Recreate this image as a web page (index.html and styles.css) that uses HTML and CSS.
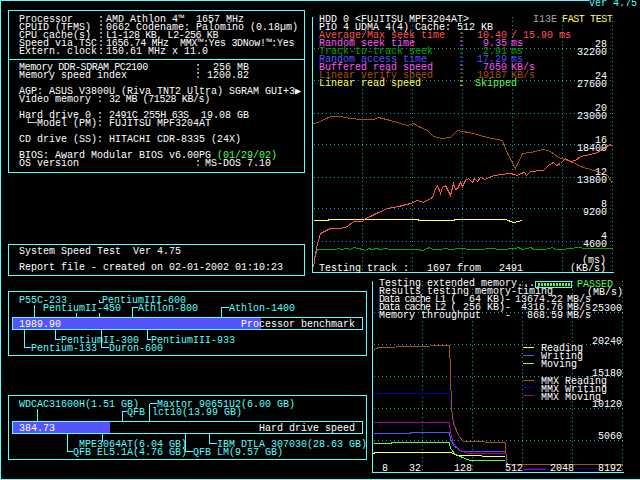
FILE: index.html
```html
<!DOCTYPE html>
<html lang="en">
<head>
  <meta charset="UTF-8" />
  <title>System Speed Test 4.75</title>
  <link rel="stylesheet" href="styles.css">
</head>
<body>
<main class="screen">
  <div class="topbar">
    <div class="rule"></div>
    <div class="ver">Ver 4.75</div>
  </div>

  <div class="upper">
    <div class="left-col">
      <section class="panel sysinfo">
        <div class="block block-cpu">
          <div class="cpu-row"><span>Processor</span><span>:</span><span>AMD Athlon 4™  1657 MHz</span></div>
          <div class="cpu-row"><span>CPUID (TFMS)</span><span>:</span><span>0662 Codename: Palomino (0.18µm)</span></div>
          <div class="cpu-row"><span>CPU cache(s)</span><span>:</span><span class="tight">L1-128 KB, L2-256 KB</span></div>
          <div class="cpu-row"><span>Speed via TSC</span><span>:</span><span class="tight2">1656.74 MHz  MMX™:Yes 3DNow!™:Yes</span></div>
          <div class="cpu-row"><span>Extern. clock</span><span>:</span><span>150.61 MHz x 11.0</span></div>
        </div>
        <div class="block block-rest">
          <div class="kv-row"><span class="tight">Memory DDR-SDRAM PC2100</span><span>:</span><span class="num">256 MB</span></div>
          <div class="kv-row"><span>Memory speed index</span><span>:</span><span class="num">1200.82</span></div>
          <div class="line gap">AGP: ASUS V3800U (Riva TNT2 Ultra) SGRAM GUI+3▶</div>
          <div class="drive-row"><span class="drive-key">Video memory :</span><span class="tight">32 MB (71528 KB/s)</span></div>
          <div class="drive-row gap"><span class="drive-key">Hard drive 0 :</span><span class="tight2">2491C 255H 63S</span><span class="drive-size">19.08 GB</span></div>
          <div class="drive-row"><span class="drive-key"> └─Model (PM):</span><span>FUJITSU MPF3204AT</span></div>
          <div class="drive-row gap"><span class="drive-key">CD drive (SS):</span><span>HITACHI CDR-8335 (24X)</span></div>
          <div class="line gap">BIOS: Award Modular BIOS v6.00PG <span class="ok">(01/29/02)</span></div>
          <div class="kv-row"><span>OS version</span><span>:</span><span class="os">MS-DOS 7.10</span></div>
        </div>
      </section>

      <section class="panel report">
        <div class="line">System Speed Test  Ver 4.75</div>
        <div class="line gap">Report file - created on 02-01-2002 01:10:23</div>
      </section>
    </div>

    <section class="chart hdd-chart">
      <svg class="plot" viewBox="312 16 301 257">
        <g transform="translate(.5 .5)" shape-rendering="crispEdges">
          <path class="grid" d="M313 48H612M313 80H612M313 113H612M313 144H612M313 177H612M313 208H612M313 241H612M362 16V271M412 16V271M462 16V271M512 16V271M562 16V271M612 16V271"/>
          <path class="axis" d="M312 16V272H613"/>
          <polyline class="c-brown" points="313,123 318,122 323,119 331,116 340,116 350,118 360,119 373,119 378,117 390,120 407,125 413,123 420,127 427,130 433,136 442,138 450,137 457,130 473,133 487,137 502,140 507,153 515,168 522,153 530,152 543,149 550,151 558,157 570,161 583,167 597,171 607,175 612,183"/>
          <polyline class="c-yellow" points="313,220 328,220 328,219 418,219 418,220 454,220 454,219 505,219 513,222 522,220"/>
          <polyline class="c-green" points="313,257 315,255 317,249 335,249 338,248 341,249 347,248 350,249 353,247 358,248 362,249 365,250 368,248 372,249 376,248 380,249 385,248 390,249 410,249 418,249 422,250 427,248 429,247 432,249 440,249 445,248 450,249 460,248 470,249 480,249 490,248 500,249 515,248 518,247 522,249 527,248 530,247 534,249 545,249 552,247 555,249 562,249 570,248 578,247 585,248 595,248 612,248"/>
          <polyline class="c-red" points="313,267 316,247 320,233 324,231 330,228 340,228 347,226 353,221 362,221 365,218 370,216 378,212 387,208 398,206 410,203 417,200 423,202 432,197 435,188 437,185 440,193 442,187 445,185 450,195 453,183 455,189 457,188 460,182 462,186 465,180 468,178 472,182 474,178 477,181 480,177 485,179 490,176 500,174 510,173 514,174 517,175 520,173 524,172 526,175 530,171 534,171 537,170 543,170 548,165 553,162 556,165 560,163 565,158 570,161 575,160 580,156 590,154 597,152 605,147 609,144 612,146"/>
        </g>
        <text class="label r" x="607" y="47">28</text>
        <text class="label r" x="607" y="55">32200</text>
        <text class="label r" x="607" y="79">24</text>
        <text class="label r" x="607" y="87">27600</text>
        <text class="label r" x="607" y="111">20</text>
        <text class="label r" x="607" y="119">23000</text>
        <text class="label r" x="607" y="143">16</text>
        <text class="label r" x="607" y="151">18400</text>
        <text class="label r" x="607" y="175">12</text>
        <text class="label r" x="607" y="183">13800</text>
        <text class="label r" x="607" y="207">8</text>
        <text class="label r" x="607" y="215">9200</text>
        <text class="label r" x="607" y="239">4</text>
        <text class="label r" x="607" y="247">4600</text>
        <text class="label r" x="606" y="263">(ms)</text>
        <text class="label r" x="606" y="271">(KB/s)</text>
        <text class="label" x="319" y="271">Testing track :   1697 from   2491</text>
      </svg>
      <div class="hdd-info">
        <div class="hdd-head"><span>HDD 0 &lt;FUJITSU MPF3204AT&gt;</span><span class="mode">I13E</span><span class="fast">FAST TEST</span></div>
        <div class="line">PIO 4 UDMA 4(4) Cache: 512 KB</div>
        <div class="seek-row red"><span>Average/Max seek time</span><span>:</span><span class="num">10.40</span><span class="unit">/ 15.90 ms</span></div>
        <div class="seek-row magenta"><span>Random seek time</span><span>:</span><span class="num">9.35</span><span class="unit">ms</span></div>
        <div class="seek-row green"><span>Track-to-track seek</span><span>:</span><span class="num">2.91</span><span class="unit">ms</span></div>
        <div class="seek-row blue"><span>Random access time</span><span>:</span><span class="num">17.29</span><span class="unit">ms</span></div>
        <div class="seek-row magenta"><span>Buffered read speed</span><span>:</span><span class="num">7650</span><span class="unit">KB/s</span></div>
        <div class="seek-row brown"><span>Linear verify speed</span><span>:</span><span class="num">19187</span><span class="unit">KB/s</span></div>
        <div class="seek-row yellow"><span>Linear read speed</span><span>:</span><span class="skip">Skipped</span></div>
      </div>
    </section>
  </div>

  <div class="lower">
    <div class="bench-col">
      <section class="bench">
        <svg class="bench-svg" viewBox="9 292 357 63">
          <g transform="translate(.5 .5)" shape-rendering="crispEdges">
            <rect class="fill" x="12" y="317" width="248" height="12"/>
            <rect class="bar" x="12" y="317" width="350" height="12"/>
            <path class="axis" d="M34 304V317M76 312V317M99 299V302H102M99 312V317M132 317V307H137M221 317V307H228M24 329V347H30M55 329V339H60M147 329V339H150M101 329V347H108"/>
          </g>
          <text class="label white" x="19" y="327">1989.90</text>
          <text class="label white" x="241" y="327">Processor benchmark</text>
          <text class="label" x="19" y="303">P55C-233</text>
          <text class="label" x="102" y="303">PentiumIII-600</text>
          <text class="label" x="43" y="311">PentiumII-450</text>
          <text class="label" x="138" y="311">Athlon-800</text>
          <text class="label" x="229" y="311">Athlon-1400</text>
          <text class="label" x="61" y="343">PentiumII-300</text>
          <text class="label" x="151" y="343">PentiumIII-933</text>
          <text class="label" x="31" y="351">Pentium-133</text>
          <text class="label" x="109" y="351">Duron-600</text>
        </svg>
      </section>

      <section class="bench">
        <svg class="bench-svg" viewBox="9 396 357 63">
          <g transform="translate(.5 .5)" shape-rendering="crispEdges">
            <rect class="fill" x="12" y="421" width="97" height="12"/>
            <rect class="bar" x="12" y="421" width="350" height="12"/>
            <path class="axis" d="M37 408V421M122 421V411H126M149 403V421M149 403H156M67 433V451H72M102 433V441M185 433V451H192M209 433V443H216"/>
          </g>
          <text class="label white" x="19" y="431">384.73</text>
          <text class="label white" x="259" y="431">Hard drive speed</text>
          <text class="label" x="19" y="407">WDCAC31600H(1.51 GB)</text>
          <text class="label" x="157" y="407">Maxtor 90651U2(6.00 GB)</text>
          <text class="label" x="127" y="415">QFB</text>
          <text class="label" x="152" y="415">lct10(13.99 GB)</text>
          <text class="label" x="79" y="447">MPE3064AT(6.04 GB)</text>
          <text class="label" x="217" y="447">IBM DTLA 307030(28.63 GB)</text>
          <text class="label" x="73" y="455">QFB EL5.1A(4.76 GB)</text>
          <text class="label" x="193" y="455">QFB LM(9.57 GB)</text>
        </svg>
      </section>
    </div>

    <section class="chart mem-chart">
      <svg class="plot" viewBox="372 280 252 193">
        <g transform="translate(.5 .5)" shape-rendering="crispEdges">
          <path class="grid" d="M373 312H622M373 344H622M373 376H622M373 408H622M373 440H622M422 280V471M472 280V471M522 280V471M572 280V471M622 280V471"/>
          <path class="axis" d="M372 280V472H623"/>
          <rect class="meter" x="535" y="281" width="36" height="6"/>
          <path class="meter-dots" d="M537 284H569"/>
          <polyline class="c-yellow" points="373,453 375,452 450,452 457,455 505,456 506,463"/>
          <polyline class="c-lime" points="373,443 390,443 392,442 449,442 450,448 455,454 467,459 470,460 505,460 506,463 522,469 532,469"/>
          <polyline class="c-blue" points="373,433 410,433 410,432 449,432 450,438 453,445 461,451 505,451 506,463"/>
          <polyline class="c-purple" points="373,422 449,422 450,432 453,443 460,450 467,453 505,453 506,469 545,469"/>
          <polyline class="c-navy" points="373,396 375,393 449,393 450,405 453,418 456,432 462,441 505,442 505,468 622,468"/>
          <polyline class="c-brown" points="373,351 375,348 379,347 412,346 449,345 450,372 451,408 453,423 458,435 463,441 505,442 506,464 622,464"/>
          <path class="c-yellow" d="M522 347H533"/>
          <path class="c-blue" d="M522 355H533"/>
          <path class="c-lime" d="M522 363H533"/>
          <path class="c-brown" d="M522 380H533"/>
          <path class="c-navy" d="M522 387H533"/>
          <path class="c-purple" d="M522 395H533"/>
        </g>
        <text class="label ok-text" x="577" y="287">PASSED</text>
        <text class="label" x="623" y="295" text-anchor="end">(MB/s)</text>
        <text class="label r2" x="622" y="311">25300</text>
        <text class="label r2" x="622" y="344">20240</text>
        <text class="label r2" x="622" y="376">15180</text>
        <text class="label r2" x="622" y="407">10120</text>
        <text class="label r2" x="622" y="439">5060</text>
        <text class="label" x="541" y="351">Reading</text>
        <text class="label" x="541" y="359">Writing</text>
        <text class="label" x="541" y="367">Moving</text>
        <text class="label" x="541" y="384">MMX Reading</text>
        <text class="label" x="541" y="392">MMX Writing</text>
        <text class="label" x="541" y="400">MMX Moving</text>
        <rect class="tick-bg" x="504" y="465" width="19" height="7"/>
        <rect class="tick-bg" x="549" y="465" width="25" height="7"/>
        <rect class="tick-bg" x="597" y="465" width="25" height="7"/>
        <text class="label" x="382" y="471">8</text>
        <text class="label" x="409" y="471">32</text>
        <text class="label" x="454" y="471">128</text>
        <text class="label" x="505" y="471">512</text>
        <text class="label" x="550" y="471">2048</text>
        <text class="label" x="598" y="471">8192</text>
      </svg>
      <div class="mem-info">
        <div class="line">Testing extended memory...</div>
        <div class="line">Results testing memory-timing</div>
        <div class="cache-row"><span class="tight3">Data cache L1 (</span><span class="num">64 KB)</span><span>-</span><span class="num">13674.22</span><span class="unit">MB/s</span></div>
        <div class="cache-row"><span class="tight3">Data cache L2 (</span><span class="num">256 KB)</span><span>-</span><span class="num">4316.76</span><span class="unit">MB/s</span></div>
        <div class="cache-row"><span class="wide">Memory throughput</span><span>-</span><span class="num">868.59</span><span class="unit">MB/s</span></div>
      </div>
    </section>
  </div>
</main>
</body>
</html>
```

FILE: styles.css
```css
html, body {
  margin: 0;
  background-color: #000;
}
body {
  width: 640px;
  height: 480px;
  overflow: hidden;
  font-family: "Liberation Mono", "DejaVu Sans Mono", monospace;
  font-size: 10px;
  line-height: 8px;
  color: #fff;
}
span, .line {
  white-space: pre;
}
.screen {
  box-sizing: border-box;
  width: 640px;
  height: 480px;
  border-left: 1px solid #54ffff;
  border-bottom: 1px solid #54ffff;
}

/* top line */
.topbar {
  display: flex;
  height: 10px;
}
.rule {
  flex: 1;
  border-top: 1px solid #54ffff;
}
.ver {
  width: 51px;
  color: #54ffff;
  white-space: pre;
}

.upper {
  display: flex;
  height: 266px;
}
.left-col {
  display: flex;
  flex-direction: column;
  justify-content: space-between;
  width: 297px;
  margin-left: 7px;
}
.panel {
  border: 1px solid #54ffff;
}
.block {
  padding-left: 10px;
}
.block-cpu {
  padding-top: 5px;
  padding-bottom: 3px;
  border-bottom: 1px solid #54ffff;
}
.block-rest {
  padding-top: 4px;
  padding-bottom: 4px;
}
.report {
  padding: 3px 10px;
}
.gap {
  margin-top: 8px;
}
.cpu-row {
  display: grid;
  grid-template-columns: 79px 8px auto;
}
.kv-row {
  display: grid;
  grid-template-columns: 176px 6px 48px;
}
.num {
  text-align: right;
}
.os {
  padding-left: 4px;
}
.drive-row {
  display: flex;
  width: 230px;
}
.drive-key {
  width: 90px;
}
.drive-size {
  margin-left: auto;
}
.tight {
  letter-spacing: -0.4px;
}
.tight2 {
  letter-spacing: -0.3px;
}
.tight3 {
  letter-spacing: -0.9px;
}
.ok {
  color: #54ff54;
}

/* charts */
.chart {
  position: relative;
}
.plot {
  position: absolute;
  left: 0;
  top: 0;
  width: 100%;
  height: 100%;
  overflow: visible;
}
.hdd-chart {
  width: 301px;
  height: 257px;
  margin: 6px 0 0 7px;
}
.mem-chart {
  width: 252px;
  height: 193px;
  margin: 4px 0 0 5px;
}
.hdd-info, .mem-info {
  position: relative;
  padding-left: 7px;
}
.hdd-head {
  display: flex;
}
.mode {
  margin-left: 64px;
  color: #a8a8a8;
}
.fast {
  margin-left: 5px;
  letter-spacing: -0.4px;
  color: #ffff54;
}
.seek-row {
  display: grid;
  grid-template-columns: 139px 6px 43px auto;
}
.unit {
  padding-left: 4px;
}
.skip {
  grid-column: span 2;
  padding-left: 11px;
  color: #54ff54;
}
.red { color: #ff5454; }
.magenta { color: #ff54ff; }
.green { color: #00a800; }
.blue { color: #5454ff; }
.brown { color: #a85400; }
.yellow { color: #ffff54; }

.cache-row {
  display: grid;
  grid-template-columns: 76px 50px 5px 53px auto;
}
.wide {
  grid-column: span 2;
}

svg text {
  font-family: "Liberation Mono", "DejaVu Sans Mono", monospace;
  font-size: 10px;
  white-space: pre;
}
.label {
  fill: #54ffff;
}
.hdd-chart .label, .mem-chart .label {
  fill: #fff;
}
.hdd-chart .r, .mem-chart .r2 {
  text-anchor: end;
}
.mem-chart .ok-text {
  fill: #54ff54;
}
.bench .white {
  fill: #fff;
}
.grid {
  fill: none;
  stroke: #00a8a8;
  stroke-dasharray: 1 3;
}
.axis {
  fill: none;
  stroke: #54ffff;
}
polyline, .c-yellow, .c-blue, .c-lime, .c-brown, .c-navy, .c-purple {
  fill: none;
}
.c-brown { stroke: #a85400; }
.c-yellow { stroke: #ffff54; }
.c-green { stroke: #00a800; }
.c-red { stroke: #ff5454; }
.c-lime { stroke: #54ff54; }
.c-blue { stroke: #5454ff; }
.c-navy { stroke: #0000a8; }
.c-purple { stroke: #a800a8; }
.meter {
  fill: none;
  stroke: #54ffff;
}
.meter-dots {
  stroke: #54ff54;
  stroke-dasharray: 2 1;
  stroke-width: 3;
}
.tick-bg {
  fill: #000;
}

/* benchmark boxes */
.lower {
  display: flex;
}
.bench-col {
  display: flex;
  flex-direction: column;
  gap: 39px;
  width: 359px;
  margin: 15px 0 0 7px;
}
.bench {
  height: 63px;
  border: 1px solid #54ffff;
}
.bench-svg {
  display: block;
  width: 357px;
  height: 63px;
  overflow: visible;
}
.fill {
  fill: #5454ff;
}
.bar {
  fill: none;
  stroke: #54ffff;
}
```
